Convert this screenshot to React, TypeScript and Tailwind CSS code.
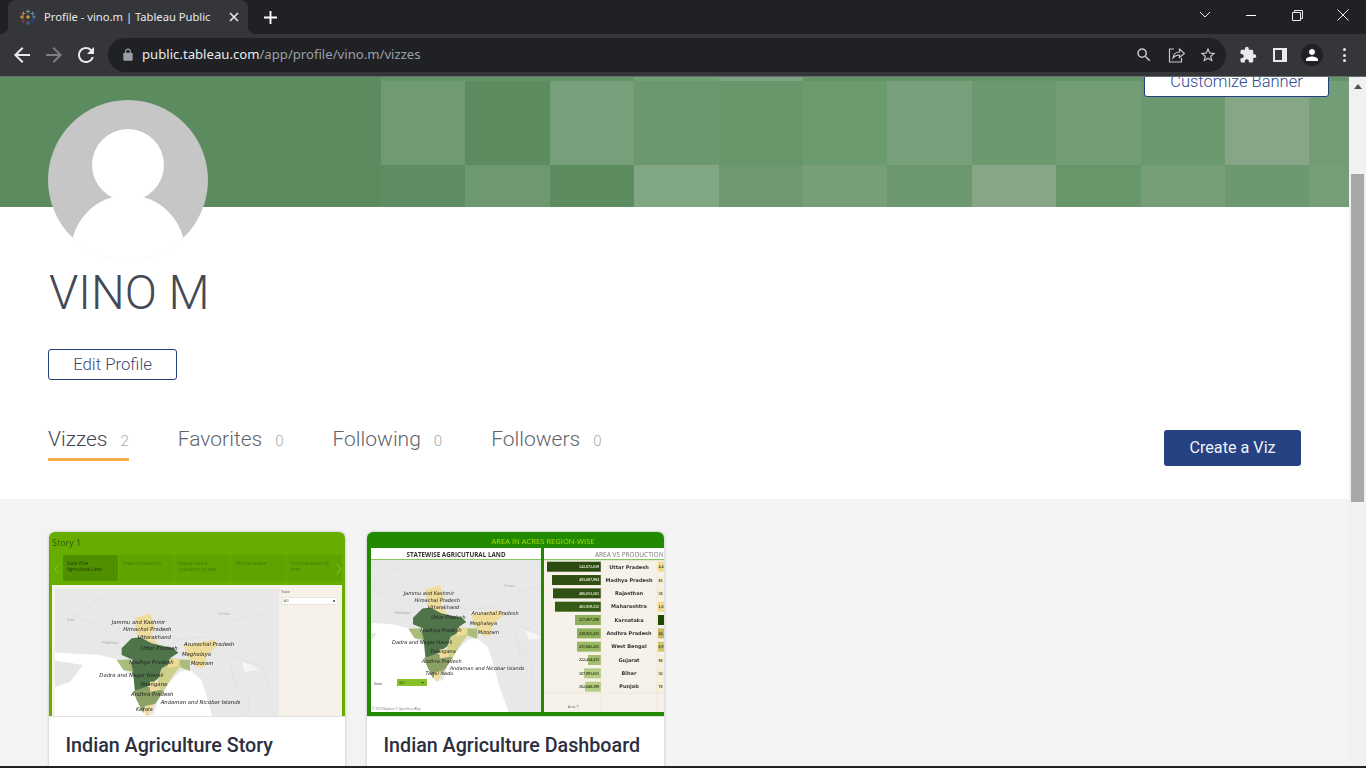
const sans = 'font-["Roboto",sans-serif]'

const bannerRows = [
  ['bg-[#66946a]', 'bg-[#66946a]', 'bg-[#66946a]', 'bg-[#72a076]', 'bg-[#7ea381]', 'bg-[#66946a]', 'bg-[#66946a]', 'bg-[#66946a]', 'bg-[#66946a]', 'bg-[#66946a]', 'bg-[#66946a]', 'bg-[#66946a]'],
  ['bg-[#6f9a73]', 'bg-[#5c8c60]', 'bg-[#789f7b]', 'bg-[#6c9870]', 'bg-[#67966b]', 'bg-[#6b9a6f]', 'bg-[#789f7b]', 'bg-[#6c9870]', 'bg-[#739d77]', 'bg-[#6c9870]', 'bg-[#87a687]', 'bg-[#739d77]'],
  ['bg-[#5f8d63]', 'bg-[#6d9870]', 'bg-[#5c8c60]', 'bg-[#80a683]', 'bg-[#6d9870]', 'bg-[#769e79]', 'bg-[#6c9870]', 'bg-[#87a687]', 'bg-[#67966b]', 'bg-[#769e79]', 'bg-[#6c9870]', 'bg-[#769e79]'],
]

function Ico({ d, className }: { d: string; className?: string }) {
  return (
    <svg viewBox="0 0 24 24" className={className} fill="currentColor">
      <path d={d} />
    </svg>
  )
}

function Favicon() {
  const marks = [
    [8, 2.5, '#7199a6'], [3.5, 4.5, '#e8762c'], [12.5, 4.5, '#5b879b'], [8, 8, '#f5b53b'],
    [2, 8, '#e8a33d'], [14, 8, '#59879b'], [3.5, 12, '#c72035'], [12.5, 12, '#1f447b'], [8, 14, '#5b6591'],
  ] as const
  return (
    <svg viewBox="0 0 16 16" className="h-4 w-4 shrink-0">
      {marks.map(([x, y, c], i) => (
        <g key={i} stroke={c} strokeWidth="1">
          <path d={`M${x - 2} ${y}h4M${x} ${y - 2}v4`} />
        </g>
      ))}
    </svg>
  )
}

function Browser() {
  return (
    <div className='shrink-0 font-["Noto_Sans",sans-serif]'>
      <div className="flex h-[34px] bg-[#202124] pl-2">
        <div className="relative flex h-[34px] w-[240px] items-center rounded-t-lg bg-[#35363a] pl-3 pr-[9px]">
          <span className="absolute bottom-0 -left-2 h-2 w-2 bg-[radial-gradient(circle_at_0_0,#202124_8px,#35363a_8.5px)]" />
          <span className="absolute bottom-0 -right-2 h-2 w-2 bg-[radial-gradient(circle_at_100%_0,#202124_8px,#35363a_8.5px)]" />
          <Favicon />
          <span className="ml-2 flex-1 truncate text-[11.2px] text-[#e8eaed]">Profile - vino.m | Tableau Public</span>
          <svg viewBox="0 0 10 10" className="h-[10px] w-[10px] text-[#e8eaed]" stroke="currentColor" strokeWidth="1.6">
            <path d="M1 1l8 8M9 1l-8 8" />
          </svg>
        </div>
        <svg viewBox="0 0 14 14" className="ml-[16px] mt-[11px] h-[13px] w-[13px] text-white" stroke="currentColor" strokeWidth="2">
          <path d="M7 0v14M0 7h14" />
        </svg>
        <div className="ml-auto flex text-[#e8eaed]">
          <div className="flex w-[46px] items-center justify-center pb-1">
            <svg viewBox="0 0 12 8" className="h-2 w-3" fill="none" stroke="currentColor" strokeWidth="1"><path d="M1 1l5 5 5-5" /></svg>
          </div>
          <div className="flex w-[46px] items-center justify-center pb-1">
            <div className="h-px w-[10px] bg-white" />
          </div>
          <div className="flex w-[46px] items-center justify-center pb-1">
            <svg viewBox="0 0 11 11" className="h-[11px] w-[11px]" fill="none" stroke="currentColor" strokeWidth="1"><path d="M.5 2.5h8v8h-8zM2.5 2.5v-2h8v8h-2" /></svg>
          </div>
          <div className="flex w-[46px] items-center justify-center pb-1">
            <svg viewBox="0 0 12 12" className="h-3 w-3" fill="none" stroke="currentColor" strokeWidth="1"><path d="M.5.5l11 11M11.5.5l-11 11" /></svg>
          </div>
        </div>
      </div>
      <div className="flex h-[42px] items-center bg-[#35363a] pl-[10px]">
        <Ico className="h-6 w-6 text-[#e8eaed]" d="M20 11H7.83l5.59-5.59L12 4l-8 8 8 8 1.41-1.41L7.83 13H20v-2z" />
        <Ico className="ml-2 h-6 w-6 text-[#7b7d81]" d="M12 4l-1.41 1.41L16.17 11H4v2h12.17l-5.58 5.59L12 20l8-8z" />
        <Ico className="ml-2 h-6 w-6 text-[#e8eaed]" d="M17.65 6.35A7.958 7.958 0 0 0 12 4c-4.42 0-7.99 3.58-7.99 8s3.57 8 7.99 8c3.73 0 6.84-2.55 7.73-6h-2.08A5.99 5.99 0 0 1 12 18c-3.31 0-6-2.69-6-6s2.69-6 6-6c1.66 0 3.14.69 4.22 1.78L13 11h7V4l-2.35 2.35z" />
        <div className="ml-[10px] flex h-[34px] w-[1118px] items-center rounded-full bg-[#202124] pl-[13px] pr-[9px]">
          <Ico className="h-[14px] w-[14px] text-[#9aa0a6]" d="M18 8h-1V6c0-2.76-2.24-5-5-5S7 3.24 7 6v2H6c-1.1 0-2 .9-2 2v10c0 1.1.9 2 2 2h12c1.1 0 2-.9 2-2V10c0-1.1-.9-2-2-2zM9 6c0-1.66 1.34-3 3-3s3 1.34 3 3v2H9V6z" />
          <span className="ml-[7px] flex-1 text-[13.15px] text-[#9aa0a6]">
            <span className="text-[#e8eaed]">public.tableau.com</span>/app/profile/vino.m/vizzes
          </span>
          <Ico className="h-[18px] w-[18px] text-[#c4c7c5]" d="M15.5 14h-.79l-.28-.27A6.471 6.471 0 0 0 16 9.5 6.5 6.5 0 1 0 9.5 16c1.61 0 3.09-.59 4.23-1.57l.27.28v.79l5 4.99L20.49 19l-4.99-5zm-6 0C7.01 14 5 11.99 5 9.5S7.01 5 9.5 5 14 7.01 14 9.5 11.99 14 9.5 14z" />
          <svg viewBox="0 0 18 18" className="ml-[14px] h-[18px] w-[18px] text-[#c4c7c5]" fill="none" stroke="currentColor" strokeWidth="1.2">
            <path d="M7 3H2.5v13h12v-4M6 12c.5-4 3-6 6.5-6V3l5 4.5-5 4V9c-3 0-5 1-6.500 3z" />
          </svg>
          <Ico className="ml-[14px] h-[18px] w-[18px] text-[#c4c7c5]" d="M22 9.24l-7.19-.62L12 2 9.19 8.63 2 9.24l5.46 4.73L5.82 21 12 17.27 18.18 21l-1.63-7.03L22 9.24zM12 15.4l-3.76 2.27 1-4.28-3.32-2.88 4.38-.38L12 6.1l1.71 4.04 4.38.38-3.32 2.88 1 4.28L12 15.4z" />
        </div>
        <Ico className="ml-[13px] h-[18px] w-[18px] text-[#e8eaed]" d="M20.5 11H19V7c0-1.1-.9-2-2-2h-4V3.500C13 2.120 11.880 1 10.500 1S8 2.120 8 3.500V5H4c-1.100 0-1.990.9-1.990 2v3.800H3.500c1.490 0 2.700 1.210 2.700 2.700s-1.210 2.700-2.700 2.700H2V20c0 1.100.9 2 2 2h3.800v-1.500c0-1.490 1.210-2.700 2.700-2.700 1.490 0 2.700 1.210 2.700 2.700V22H17c1.100 0 2-.9 2-2v-4h1.500c1.380 0 2.500-1.120 2.500-2.500S21.880 11 20.500 11z" />
        <svg viewBox="0 0 14 14" className="ml-[16px] h-[14px] w-[14px] text-[#e8eaed]" fill="currentColor">
          <path fillRule="evenodd" d="M0 0h14v14H0zM2 2v10h7V2z" />
        </svg>
        <div className="ml-[14px] flex h-[22px] w-[22px] items-center justify-center rounded-full bg-[#202124]">
          <Ico className="h-[18px] w-[18px] text-white" d="M12 12c2.210 0 4-1.790 4-4s-1.790-4-4-4-4 1.790-4 4 1.790 4 4 4zm0 2c-2.670 0-8 1.340-8 4v2h16v-2c0-2.660-5.330-4-8-4z" />
        </div>
        <div className="ml-[20px] flex flex-col gap-[2.500px]">
          <span className="h-[3px] w-[3px] rounded-full bg-[#e8eaed]" />
          <span className="h-[3px] w-[3px] rounded-full bg-[#e8eaed]" />
          <span className="h-[3px] w-[3px] rounded-full bg-[#e8eaed]" />
        </div>
      </div>
      <div className="h-px bg-[#6a6b6e]" />
    </div>
  )
}

function Banner() {
  return (
    <div className="relative h-[130px] shrink-0 overflow-hidden bg-[#5c8b60]">
      <div className="ml-[381px] grid grid-cols-[repeat(12,84.4px)] grid-rows-[4px_84px_42px]">
        {bannerRows.map((row, r) => row.map((c, i) => <div key={`${r}-${i}`} className={c} />))}
      </div>
      <div className="absolute top-[-10px] right-[20px] flex h-[30px] w-[185px] items-center justify-center rounded-b-[3px] border border-[#24417f] bg-white text-[16.5px] font-light text-[#2f4d94]">
        Customize Banner
      </div>
    </div>
  )
}

function Avatar() {
  return (
    <svg viewBox="0 0 160 160" className="relative -mt-[107px] h-40 w-40 shrink-0">
      <defs>
        <clipPath id="avatar-clip"><circle cx="80" cy="80" r="80" /></clipPath>
      </defs>
      <g clipPath="url(#avatar-clip)">
        <rect width="160" height="160" fill="#c6c6c6" />
        <circle cx="80" cy="65" r="36" fill="#fff" />
        <circle cx="80" cy="152" r="57" fill="#fff" />
        <rect y="137" width="160" height="23" fill="#fff" />
      </g>
    </svg>
  )
}

function Tab({ label, count, active }: { label: string; count: number; active?: boolean }) {
  return (
    <div className={`flex h-[34px] items-start gap-[13px] border-b-[3px] ${active ? 'border-[#f5b04c]' : 'border-transparent'}`}>
      <span className={`text-[21px] leading-6 font-light ${active ? 'text-[#3f4552]' : 'text-[#5f636b]'}`}>{label}</span>
      <span className="pt-[2px] text-[15px] leading-6 font-light text-[#a9aaac]">{count}</span>
    </div>
  )
}

const mapLabels: [string, number, number][] = [
  ['Jammu and Kashmir', 65, 132],
  ['Himachal Pradesh', 100, 154],
  ['Uttarakhand', 143, 176],
  ['Uttar Pradesh', 153, 209],
  ['Arunachal Pradesh', 282, 197],
  ['Meghalaya', 276, 229],
  ['Mizoram', 302, 256],
  ['Madhya Pradesh', 118, 251],
  ['Dadra and Nagar Haveli', 28, 290],
  ['Telangana', 150, 317],
  ['Andhra Pradesh', 123, 349],
  ['Andaman and Nicobar Islands', 212, 373],
]

// x/y are in the coordinates of the larger map, the second thumbnail scales them down
function IndiaMap({ tx, ty, s, extra }: { tx: number; ty: number; s: number; extra: [string, number, number] }) {
  return (
    <g transform={`translate(${tx} ${ty}) scale(${s})`}>
      <rect x="-160" y="-60" width="800" height="600" fill="#e8e8e8" />
      <path fill="#fff" d="M-160 215L30 225 85 240 100 270 130 290 135 330 170 405 190 405 215 330 270 275 300 270 335 300 350 350 370 420 400 505 380 540-160 540z" />
      <path fill="#e6e6e6" d="M-160 234L-21 255-60 306-160 340z" />
      <path fill="#f6f6f6" d="M-160 60l40 10 10 70-50 20zM455 245l30 10 20 15-40 5z" />
      <path fill="none" stroke="#d6d6d6" strokeWidth="1.200" d="M-100 70L-30 120 20 130 60 180 95 205M-60 123L20 60 70 40M60 60L135 115M195 140L260 180 350 170 430 120 520 100M380 190L420 250 440 330 410 350M430 230L520 260 540 340M420 290L480 340 470 420" />
      <path fill="#f0dc9a" d="M135 115L180 100 195 140 185 165 205 195 150 175 140 165zM282 195L370 180 385 195 350 225 345 262 318 262 300 240 290 225zM160 375L195 365 175 408 165 405z" />
      <path fill="#cfd08a" d="M240 235L300 240 300 272 270 262 250 285 222 332 200 325 205 295 215 265z" />
      <path fill="#4f7449" d="M95 205L125 175 150 172 185 190 250 205 265 218 240 235 250 245 215 265 205 295 172 320 135 335 130 285 118 258 130 240 95 225z" />
      <path fill="#a9bc7a" d="M80 240L120 238 130 275 100 270zM270 240L300 240 300 272 272 262z" />
      <path fill="#8aa065" d="M130 333L172 320 222 332 195 372 165 378 160 400 140 360z" />
      <path fill="#f0dc9a" d="M238 238h30l-5 20-30 7zM180 305h25l5 25-30 5z" />
      <g fontFamily="'DejaVu Sans',sans-serif" fontSize="16" fontStyle="italic" fill="#222">
        {mapLabels.concat([extra]).map(([t, x, y]) => (
          <text key={t} x={x} y={y}>{t}</text>
        ))}
      </g>
      <g fontFamily="'DejaVu Sans',sans-serif" fontSize="12" fill="#aaa">
        <text x="385" y="105">China</text>
        <text x="37" y="192">Pakistan</text>
        {s > 0.32 && <text x="-70" y="123">Iran</text>}
      </g>
    </g>
  )
}

function StoryThumb() {
  const tabs: [number, string, string?][] = [
    [14, 'State Wise', 'Agricultural Land'],
    [70, 'Area vs Production'],
    [126, 'Season based', 'cultivation by area'],
    [182, 'Yield by season'],
    [238, 'Crop plantation by', 'area'],
  ]
  return (
    <svg viewBox="0 0 296 184" className="block h-[184px] w-full blur-[0.4px]">
      <rect width="296" height="184" fill="#66ad00" />
      <text x="3" y="14" fontFamily="'Open Sans',sans-serif" fontSize="9" fill="#2f5a00">Story 1</text>
      {tabs.map(([x, a, b], i) => (
        <g key={x}>
          <rect x={x} y="23" width="55" height="26" fill={i === 0 ? '#4f8f00' : '#5fa300'} />
          <g fontFamily="'Open Sans',sans-serif" fontSize="4.400" fill={i === 0 ? '#1d3a00' : '#3f7a00'}>
            <text x={x + 4} y="33">{a}</text>
            {b && <text x={x + 4} y="39">{b}</text>}
          </g>
        </g>
      ))}
      <path d="M10 32l-4 5 4 5M288 32l4 5-4 5" fill="none" stroke="#86c13a" strokeWidth="1" />
      <rect x="3" y="53" width="290" height="131" fill="#f6f2ea" />
      <svg x="6" y="57" width="224" height="127" viewBox="6 57 224 127">
        <IndiaMap tx={41} ty={48} s={0.3333} extra={['Kerala', 138, 394]} />
      </svg>
      <text x="232.500" y="61" fontFamily="'Open Sans',sans-serif" fontSize="3.500" fill="#555">State</text>
      <rect x="232.700" y="65.700" width="56" height="6.400" fill="#fff" stroke="#ccc" strokeWidth=".4" />
      <text x="234" y="70" fontFamily="'Open Sans',sans-serif" fontSize="3.500" fill="#666">(All)</text>
      <circle cx="285" cy="69" r="1" fill="#444" />
    </svg>
  )
}

const rows: [string, string, number, string, string, string][] = [
  ['Uttar Pradesh', '542,672,639', 180, '#2b4a10', '#f2dc8a', '4,4'],
  ['Madhya Pradesh', '493,087,994', 185, '#2f5012', '#f7efcf', '83'],
  ['Rajasthan', '486,053,165', 186, '#2f5012', '#f7efcf', '58'],
  ['Maharashtra', '461,919,552', 188, '#345a14', '#f2dc8a', '1,6'],
  ['Karnataka', '257,907,399', 208, '#8fae5a', '#1f4a00', ''],
  ['Andhra Pradesh', '238,925,335', 210, '#8fae5a', '#c9b85f', '26,'],
  ['West Bengal', '237,682,265', 210, '#9ab763', '#d3c868', '8,9'],
  ['Gujarat', '222,434,333', 221, '#a3bf6d', '#f7efcf', '90'],
  ['Bihar', '167,995,631', 217, '#b5cc85', '#f7efcf', '56'],
  ['Punjab', '162,848,399', 218, '#b5cc85', '#f7efcf', '78'],
]

function DashboardThumb() {
  return (
    <svg viewBox="0 0 297 184" className="block h-[184px] w-full blur-[0.4px]">
      <rect width="297" height="184" fill="#218a00" />
      <text x="176" y="12" textAnchor="middle" fontFamily="'Open Sans',sans-serif" fontSize="7.600" fill="#a8e000">AREA IN ACRES REGION-WISE</text>
      <rect x="4" y="16" width="170" height="164" fill="#f4f4f4" />
      <rect x="4" y="16" width="170" height="11" fill="#fff" />
      <rect x="4" y="27" width="170" height="1.200" fill="#86c75a" />
      <text x="89" y="24.500" textAnchor="middle" fontFamily="'Open Sans',sans-serif" fontWeight="700" fontSize="6.300" fill="#333">STATEWISE AGRICUTURAL LAND</text>
      <svg x="4" y="28.500" width="170" height="151.500" viewBox="4 28.500 170 151.500">
        <IndiaMap tx={16.300} ty={21.700} s={0.313} extra={['Tamil Nadu', 135, 387]} />
      </svg>
      <text x="7" y="152.500" fontFamily="'Open Sans',sans-serif" fontSize="3.500" fill="#444">State</text>
      <rect x="30" y="147" width="30" height="7" fill="#86c12a" />
      <text x="32" y="152" fontFamily="'Open Sans',sans-serif" fontSize="3.500" fill="#3a5a10">(All)</text>
      <path d="M54 150h3l-1.500 1.500z" fill="#333" />
      <text x="5.300" y="178" fontFamily="'Open Sans',sans-serif" fontSize="3" fill="#777">© 2023 Mapbox © OpenStreetMap</text>

      <rect x="177" y="16" width="120" height="164" fill="#f6f2ea" />
      <rect x="177" y="16" width="120" height="11" fill="#fff" />
      <rect x="177" y="27" width="120" height="1.200" fill="#86c75a" />
      <text x="228" y="24.500" fontFamily="'Open Sans',sans-serif" fontSize="6.500" fill="#777">AREA VS PRODUCTION</text>
      {rows.map(([name, value, x, bar, right, rv], i) => {
        const y = 34.700 + i * 13.330
        return (
          <g key={name}>
            <rect x={x} y={y - 5} width={234 - x} height="10" fill={bar} />
            <text x="232" y={y + 1.300} textAnchor="end" fontFamily="'Liberation Serif',serif" fontSize="4" fill={i < 4 ? '#e8ecd8' : '#2b3a10'} fontWeight="700">{value}</text>
            <text x="262" y={y + 1.800} textAnchor="middle" fontFamily="'DejaVu Sans',sans-serif" fontWeight="700" fontSize="5" fill="#333">{name}</text>
            <rect x="291" y={y - 5} width="6" height="10" fill={right} />
            <text x="291.500" y={y + 1.500} fontFamily="'Liberation Serif',serif" fontWeight="700" fontSize="4" fill="#333">{rv}</text>
          </g>
        )
      })}
      <path d="M177 161h120M234 28v152M290 28v152" stroke="#e3dfd5" strokeWidth=".5" />
      <text x="201" y="176" fontFamily="'Open Sans',sans-serif" fontSize="3.500" fill="#666">Area ⊤</text>
    </svg>
  )
}

function Card({ title, children, className }: { title: string; children: React.ReactNode; className: string }) {
  return (
    <div className={`h-[260px] shrink-0 overflow-hidden rounded-t-md bg-white shadow-[0_0_3px_rgba(0,0,0,0.25)] ${className}`}>
      {children}
      <div className="border-t border-[#e2e2e2] pl-[16.500px] pt-[16px] text-[19.700px] leading-[26px] font-medium text-[#2b2f3f]">{title}</div>
    </div>
  )
}

function Scrollbar() {
  return (
    <div className="flex w-[17px] shrink-0 flex-col items-center bg-[#f1f1f1]">
      <svg viewBox="0 0 8 5" className="mt-[7px] h-[5px] w-2 text-[#505050]" fill="currentColor"><path d="M4 0l4 5H0z" /></svg>
      <div className="mt-[85px] h-[328px] w-[13px] bg-[#a8a8a8]" />
    </div>
  )
}

export default function App() {
  return (
    <div className={`flex h-[768px] flex-col overflow-hidden ${sans}`}>
      <Browser />
      <div className="flex min-h-0 flex-1">
        <div className="min-w-0 flex-1 overflow-hidden bg-[#f3f3f3]">
          <Banner />
          <div className="flex h-[292px] flex-col bg-white pl-12 pr-[48px]">
            <Avatar />
            <h1 className="mt-[5px] pl-px text-[47.500px] leading-14 font-light text-[#444a55]">VINO M</h1>
            <div className="mt-[28px] flex h-[31px] w-[129px] items-center justify-center rounded-[3px] border border-[#24417f] text-[16.800px] font-light text-[#3c4a72]">
              Edit Profile
            </div>
            <div className="mt-[47px] flex items-start">
              <div className="flex gap-[49px]">
                <Tab label="Vizzes" count={2} active />
                <Tab label="Favorites" count={0} />
                <Tab label="Following" count={0} />
                <Tab label="Followers" count={0} />
              </div>
              <div className="mt-[3px] ml-auto flex h-9 w-[137px] items-center justify-center rounded-[3px] bg-[#274282] text-[16.200px] text-[#f0f3fa]">
                Create a Viz
              </div>
            </div>
          </div>
          <div className="flex gap-[22px] pl-[49px] pt-[33px]">
            <Card title="Indian Agriculture Story" className="w-[296px]"><StoryThumb /></Card>
            <Card title="Indian Agriculture Dashboard" className="w-[297px]"><DashboardThumb /></Card>
          </div>
        </div>
        <Scrollbar />
      </div>
      <div className="h-[2px] shrink-0 bg-[#202124]" />
    </div>
  )
}
